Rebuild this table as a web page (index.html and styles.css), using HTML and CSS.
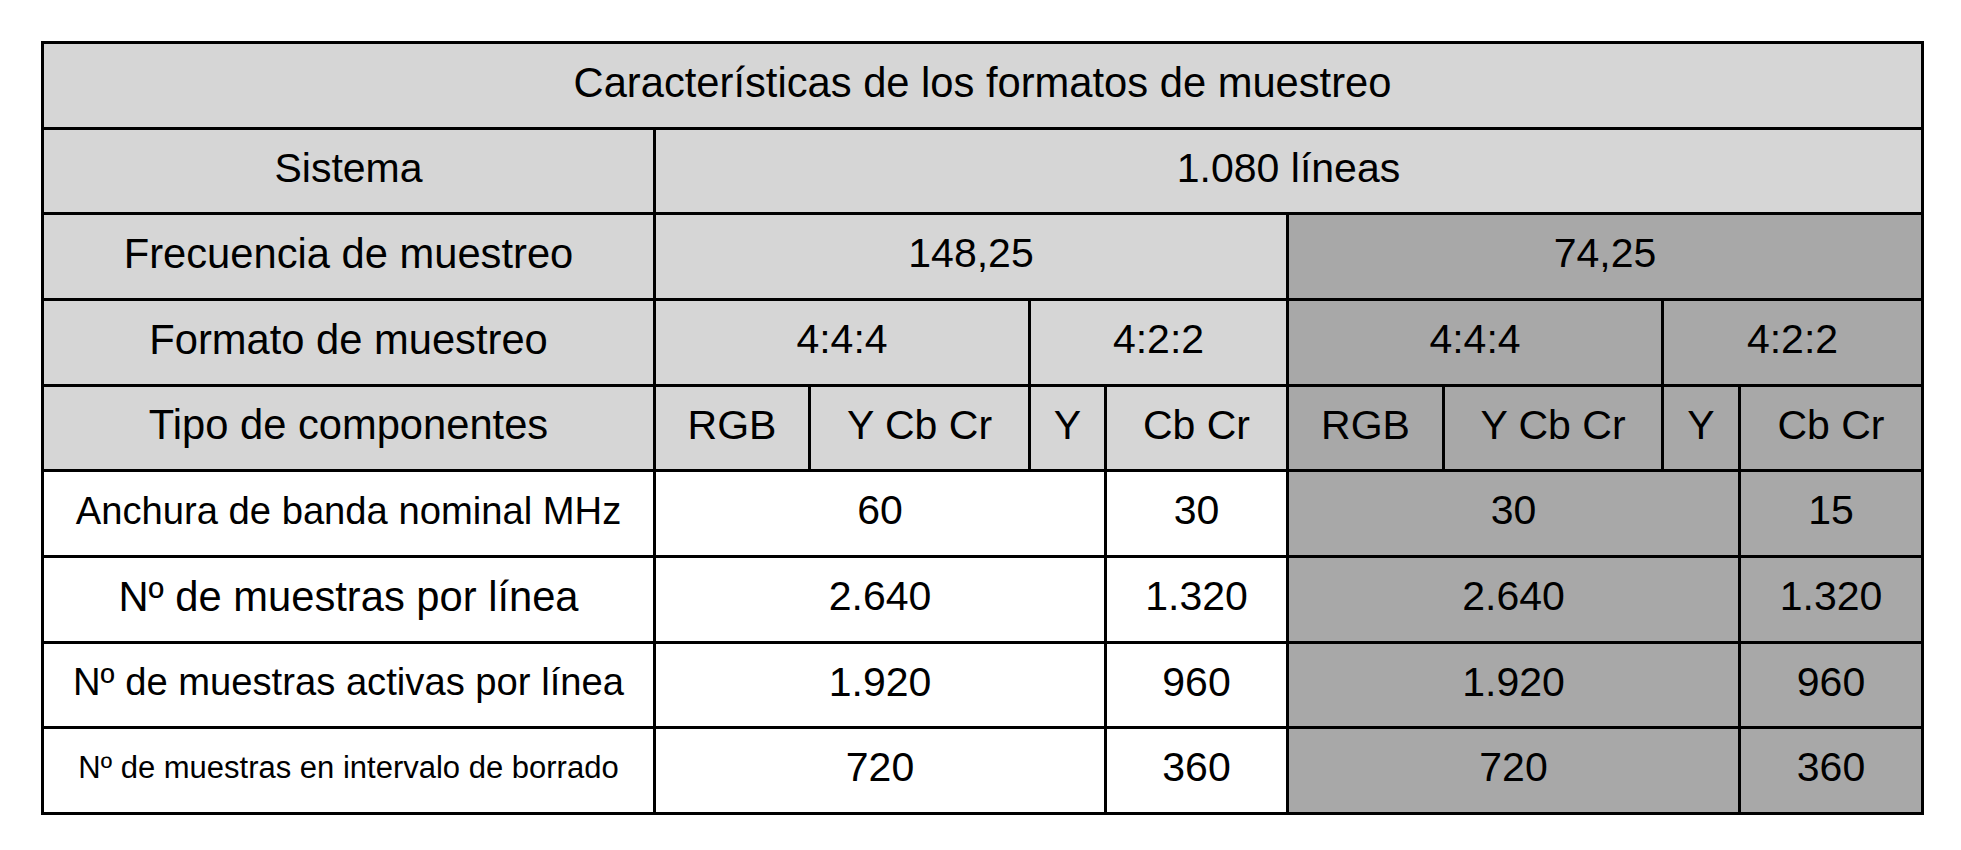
FILE: index.html
```html
<!DOCTYPE html>
<html lang="es">
<head>
<meta charset="utf-8">
<title>Características de los formatos de muestreo</title>
<link rel="stylesheet" href="styles.css">
</head>
<body>
<div class="page">
  <div class="table">
    <div class="cell light span-all label-lg">Características de los formatos de muestreo</div>

    <div class="cell light">Sistema</div>
    <div class="cell light c2-10">1.080 líneas</div>

    <div class="cell light label-lg">Frecuencia de muestreo</div>
    <div class="cell light c2-6">148,25</div>
    <div class="cell dark c6-10">74,25</div>

    <div class="cell light label-lg">Formato de muestreo</div>
    <div class="cell light c2-4">4:4:4</div>
    <div class="cell light c4-6">4:2:2</div>
    <div class="cell dark c6-8">4:4:4</div>
    <div class="cell dark c8-10">4:2:2</div>

    <div class="cell light label-lg">Tipo de componentes</div>
    <div class="cell light">RGB</div>
    <div class="cell light">Y Cb Cr</div>
    <div class="cell light">Y</div>
    <div class="cell light">Cb Cr</div>
    <div class="cell dark">RGB</div>
    <div class="cell dark">Y Cb Cr</div>
    <div class="cell dark">Y</div>
    <div class="cell dark">Cb Cr</div>

    <div class="cell white label-md">Anchura de banda nominal MHz</div>
    <div class="cell white c2-5">60</div>
    <div class="cell white">30</div>
    <div class="cell dark c6-9">30</div>
    <div class="cell dark">15</div>

    <div class="cell white label-lg">Nº de muestras por línea</div>
    <div class="cell white c2-5">2.640</div>
    <div class="cell white">1.320</div>
    <div class="cell dark c6-9">2.640</div>
    <div class="cell dark">1.320</div>

    <div class="cell white label-md">Nº de muestras activas por línea</div>
    <div class="cell white c2-5">1.920</div>
    <div class="cell white">960</div>
    <div class="cell dark c6-9">1.920</div>
    <div class="cell dark">960</div>

    <div class="cell white label-sm">Nº de muestras en intervalo de borrado</div>
    <div class="cell white c2-5">720</div>
    <div class="cell white">360</div>
    <div class="cell dark c6-9">720</div>
    <div class="cell dark">360</div>
  </div>
</div>
</body>
</html>
```

FILE: styles.css
```css
html, body {
  margin: 0;
  padding: 0;
  background: #ffffff;
}

.page {
  padding: 41px 0 0 41px;
}

.table {
  display: grid;
  width: max-content;
  grid-template-columns: 609px 152px 217px 73px 179px 153px 216px 74px 180px;
  grid-template-rows: 83px 82px 83px 83px 82px 83px 83px 82px 83px;
  gap: 3px;
  padding: 3px;
  background: #000000;
  font-family: "Liberation Sans", Arial, Helvetica, sans-serif;
  font-size: 41px;
  color: #000000;
}

.cell {
  display: flex;
  align-items: center;
  justify-content: center;
  padding-bottom: 6px;
  box-sizing: border-box;
  white-space: nowrap;
}

.light { background: #d6d6d6; }
.dark { background: #a8a8a8; }
.white { background: #ffffff; }

.span-all { grid-column: 1 / 10; }
.c2-10 { grid-column: 2 / 10; }
.c2-6 { grid-column: 2 / 6; }
.c6-10 { grid-column: 6 / 10; }
.c2-4 { grid-column: 2 / 4; }
.c4-6 { grid-column: 4 / 6; }
.c6-8 { grid-column: 6 / 8; }
.c8-10 { grid-column: 8 / 10; }
.c2-5 { grid-column: 2 / 5; }
.c6-9 { grid-column: 6 / 9; }

.label-lg { font-size: 41.7px; }
.label-md { font-size: 38.2px; }
.label-sm { font-size: 31px; }
```
